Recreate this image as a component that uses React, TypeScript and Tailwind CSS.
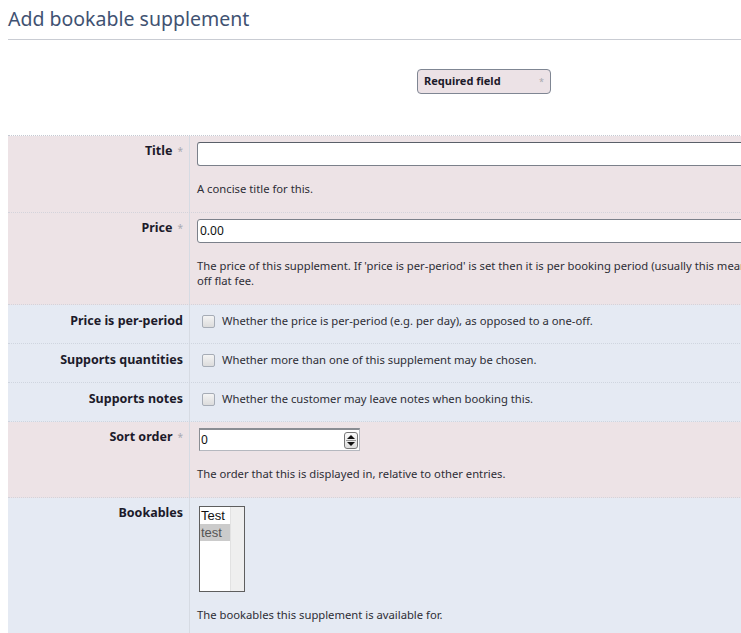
import React from "react";

const font = { fontFamily: '"Noto Sans", "Open Sans", sans-serif' };

function Label({ text, req }: { text: string; req?: boolean }) {
  return (
    <div className="w-[182px] shrink-0 border-r border-[#d6dbe3] pr-[6px] pt-[6px] text-right text-[12.5px] font-bold leading-[18px] text-[#1c1a2a]">
      {text}
      {req && <span className="ml-[5px] align-top text-[10px] font-normal text-[#a9a9b0]">*</span>}
    </div>
  );
}

function Help({ children }: { children: React.ReactNode }) {
  return <div className="text-[11.25px] leading-[15px] text-[#2e2e36] whitespace-nowrap">{children}</div>;
}

function CheckRow({ label, text }: { label: string; text: string }) {
  return (
    <div className="flex h-[39px] border-b border-dotted border-[#cfd5df] bg-[#e5eaf3]">
      <div className="flex w-[182px] shrink-0 items-center justify-end border-r border-[#d6dbe3] pr-[6px] pb-[6px] text-[12.5px] font-bold text-[#1c1a2a]">
        {label}
      </div>
      <div className="flex items-center pl-[12px] pb-[6px]">
        <span className="h-[13px] w-[13px] rounded-[2px] border border-[#a6acb6] bg-gradient-to-b from-[#f4f4f4] to-[#dcdcdc]" />
        <span className="ml-[7px] text-[11.25px] text-[#2e2e36] whitespace-nowrap">{text}</span>
      </div>
    </div>
  );
}

export default function App() {
  return (
    <div className="h-[633px] w-[741px] overflow-hidden bg-white" style={font}>
      <div className="pl-[8px]">
        <h1 className="pt-[5px] text-[19.5px] leading-[28px] text-[#3f5272]">Add bookable supplement</h1>
        <div className="mt-[6px] h-px w-[733px] bg-[#c9ccd3]" />
        <div className="flex pt-[29px] pl-[409px]">
          <div className="flex h-[25px] w-[134px] items-center justify-between rounded-[4px] border border-[#7f8693] bg-[#ece2e6] pl-[6px] pr-[6px]">
            <span className="text-[11px] font-bold text-[#1c1a2a]">Required field</span>
            <span className="text-[9px] text-[#a9a9b0]">*</span>
          </div>
        </div>

        <div className="mt-[41px] w-[800px] border-t border-dotted border-[#c5cad3]">
          {/* Title */}
          <div className="flex border-b border-dotted border-[#d3d3db] bg-[#ede3e6]">
            <Label text="Title" req />
            <div className="flex-1 pl-[7px] pt-[6px] pb-[16px]">
              <div className="h-[24px] w-[600px] rounded-[3px] border border-[#7b808a] border-t-[#5a5f69] bg-white" />
              <div className="mt-[15px]">
                <Help>A concise title for this.</Help>
              </div>
            </div>
          </div>
          {/* Price */}
          <div className="flex border-b border-dotted border-[#d3d3db] bg-[#ede3e6]">
            <Label text="Price" req />
            <div className="flex-1 pl-[7px] pt-[6px] pb-[16px]">
              <div className="flex h-[24px] w-[600px] items-center rounded-[3px] border border-[#7b808a] bg-white pl-[2px] text-[12px] text-[#111]">
                0.00
              </div>
              <div className="mt-[15px]">
                <Help>
                  The price of this supplement. If 'price is per-period' is set then it is per booking period (usually this means per day), otherwise it is a one-
                </Help>
                <Help>off flat fee.</Help>
              </div>
            </div>
          </div>
          <CheckRow label="Price is per-period" text="Whether the price is per-period (e.g. per day), as opposed to a one-off." />
          <CheckRow label="Supports quantities" text="Whether more than one of this supplement may be chosen." />
          <CheckRow label="Supports notes" text="Whether the customer may leave notes when booking this." />
          {/* Sort order */}
          <div className="flex border-b border-dotted border-[#d3d3db] bg-[#ede3e6]">
            <Label text="Sort order" req />
            <div className="flex-1 pl-[7px] pt-[6px] pb-[16px]">
              <div className="ml-[2px] flex h-[23px] w-[161px] items-center border border-[#b5b8bf] border-t-2 border-t-[#8a8d93] border-l-[#8a8d93] bg-white">
                <span className="flex-1 pl-[1px] text-[12px] text-[#111]">0</span>
                <div className="mr-[1px] flex h-[17px] w-[14px] flex-col items-center justify-center rounded-[3px] border border-[#777] bg-gradient-to-b from-[#fafafa] to-[#dedede]">
                  <svg width="8" height="4" viewBox="0 0 8 4"><path d="M0 4 L4 0 L8 4 Z" fill="#111" /></svg>
                  <div className="my-[1px] h-px w-[10px] bg-[#999]" />
                  <svg width="8" height="4" viewBox="0 0 8 4"><path d="M0 0 L8 0 L4 4 Z" fill="#111" /></svg>
                </div>
              </div>
              <div className="mt-[15px]">
                <Help>The order that this is displayed in, relative to other entries.</Help>
              </div>
            </div>
          </div>
          {/* Bookables */}
          <div className="flex bg-[#e5eaf3]">
            <Label text="Bookables" />
            <div className="flex-1 pl-[7px] pt-[8px] pb-[16px]">
              <div className="ml-[2px] flex h-[86px] w-[46px] border border-[#5e5e5e] bg-white" style={{ fontFamily: '"Liberation Sans", Arial, sans-serif' }}>
                <div className="w-[30px]">
                  <div className="h-[17px] pl-[1px] text-[13px] leading-[17px] text-[#111]">Test</div>
                  <div className="h-[17px] bg-[#cbcbcb] pl-[1px] text-[13px] leading-[17px] text-[#555]">test</div>
                </div>
                <div className="flex-1 border-l border-[#e2e2e2] bg-[#efefef]" />
              </div>
              <div className="mt-[15px]">
                <Help>The bookables this supplement is available for.</Help>
              </div>
            </div>
          </div>
        </div>
      </div>
    </div>
  );
}
